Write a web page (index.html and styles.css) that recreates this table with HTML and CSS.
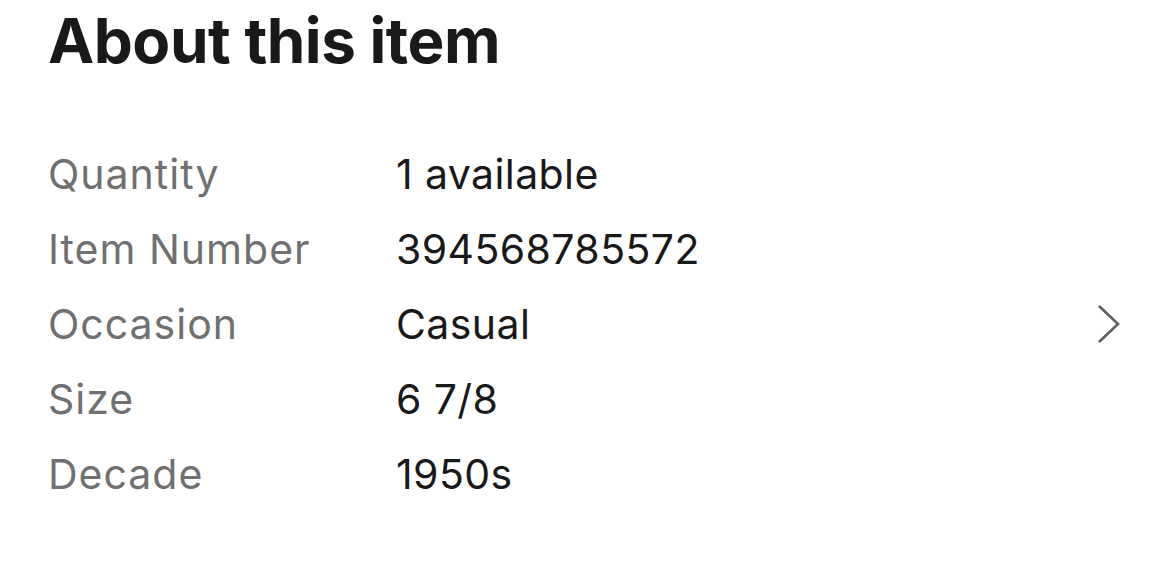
FILE: index.html
```html
<!DOCTYPE html>
<html lang="en">
<head>
<meta charset="utf-8">
<link rel="stylesheet" href="styles.css">
</head>
<body>
<section class="about">
  <h2 class="title">About this item</h2>
  <dl class="specs">
    <div class="row"><dt>Quantity</dt><dd>1 available</dd></div>
    <div class="row"><dt>Item Number</dt><dd>394568785572</dd></div>
    <div class="row"><dt>Occasion</dt><dd>Casual</dd>
      <svg class="chev" width="26" height="42" viewBox="0 0 26 42"><path d="M3 3 L22 21 L3 39" fill="none" stroke="#5f5f5f" stroke-width="2.6"/></svg>
    </div>
    <div class="row"><dt>Size</dt><dd>6 7/8</dd></div>
    <div class="row"><dt>Decade</dt><dd>1950s</dd></div>
  </dl>
</section>
</body>
</html>
```
FILE: styles.css
```css
html, body { margin: 0; padding: 0; background: #fff; }
body { font-family: Inter, "Noto Sans", sans-serif; color: #191919; }
.about { padding: 0 48px; }
.title {
  margin: 0;
  padding-top: 5px;
  font-size: 62px;
  font-weight: 700;
  line-height: 72px;
  letter-spacing: -0.5px;
}
.specs { margin: 59px 0 0; padding: 0; }
.row {
  display: flex;
  align-items: center;
  height: 75px;
}
.row dt {
  width: 348px;
  color: #707070;
  font-size: 41px;
  letter-spacing: 1px;
}
.row dd {
  margin: 0;
  flex: 1;
  font-size: 41px;
  letter-spacing: 0.4px;
  color: #191919;
}
```
